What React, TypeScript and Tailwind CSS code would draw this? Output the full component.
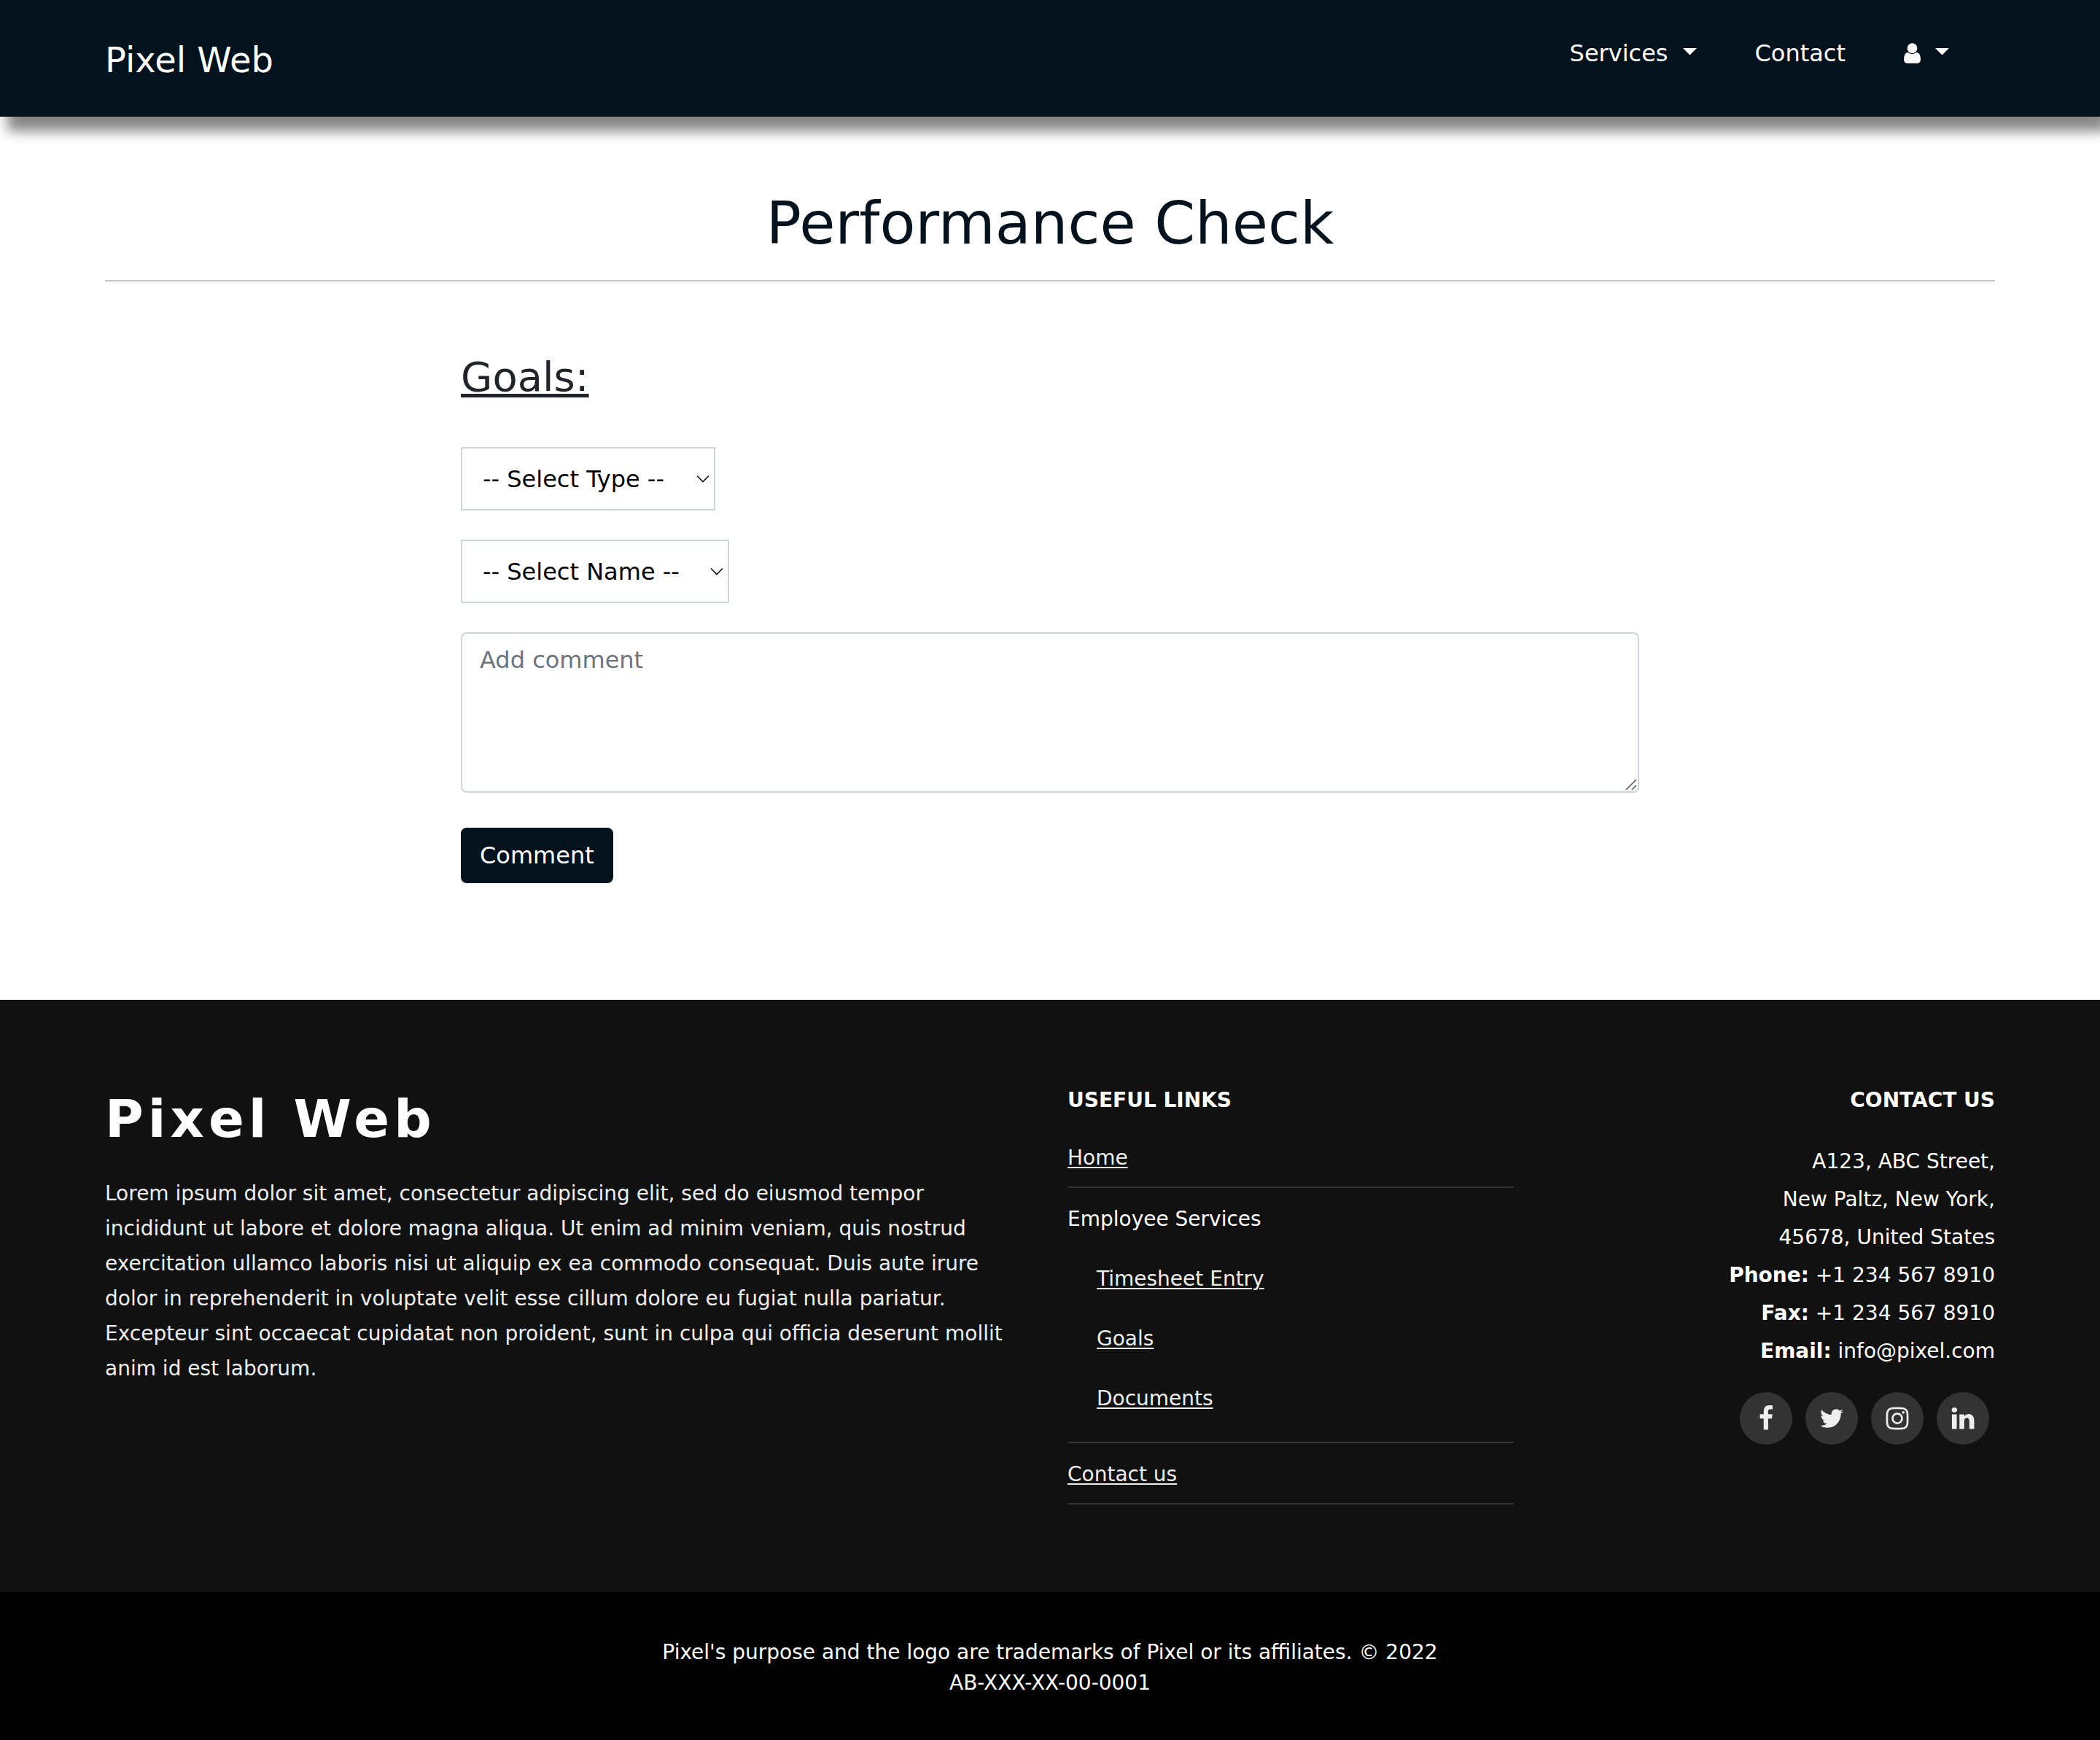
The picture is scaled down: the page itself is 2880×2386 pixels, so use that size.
import React from "react";

type IconProps = { className?: string };

const socialPaths = {
  facebook:
    "M1343 12v264h-157q-86 0-116 36t-30 108v189h293l-39 296h-254v759h-306v-759h-255v-296h255v-218q0-186 104-288.5t277-102.5q147 0 228 12z",
  twitter:
    "M1684 408q-67 98-162 167 1 14 1 42 0 130-38 259.5t-115.5 248.5-184.5 210.5-258 146-323 54.5q-271 0-496-145 35 4 78 4 225 0 401-138-105-2-188-64.5t-114-159.5q33 5 61 5 43 0 85-11-112-23-185.5-111.5t-73.5-205.5v-4q68 38 146 41-66-44-105-115t-39-154q0-88 44-163 121 149 294.5 238.5t371.5 99.5q-8-38-8-74 0-134 94.5-228.5t228.5-94.5q140 0 236 102 109-21 205-78-37 115-142 178 93-10 186-50z",
  instagram:
    "M1152 896q0-106-75-181t-181-75-181 75-75 181 75 181 181 75 181-75 75-181zm138 0q0 164-115 279t-279 115-279-115-115-279 115-279 279-115 279 115 115 279zm108-410q0 38-27 65t-65 27-65-27-27-65 27-65 65-27 65 27 27 65zm-502-220q-7 0-76.5-.5t-105.5 0-96.5 3-103 10-71.5 18.5q-50 20-88 58t-58 88q-11 29-18.5 71.5t-10 103-3 96.5 0 105.5.5 76.5-.5 76.5 0 105.5 3 96.5 10 103 18.5 71.5q20 50 58 88t88 58q29 11 71.5 18.5t103 10 96.5 3 105.5 0 76.5-.5 76.5.5 105.5 0 96.5-3 103-10 71.5-18.5q50-20 88-58t58-88q11-29 18.5-71.5t10-103 3-96.5 0-105.5-.5-76.5.5-76.5 0-105.5-3-96.5-10-103-18.5-71.5q-20-50-58-88t-88-58q-29-11-71.5-18.5t-103-10-96.5-3-105.5 0-76.5.5zm768 630q0 229-5 317-10 208-124 322t-322 124q-88 5-317 5t-317-5q-208-10-322-124t-124-322q-5-88-5-317t5-317q10-208 124-322t322-124q88-5 317-5t317 5q208 10 322 124t124 322q5 88 5 317z",
  linkedin:
    "M477 625v991h-330v-991h330zm21-306q1 73-50.5 122t-135.5 49h-2q-82 0-132-49t-50-122q0-74 51.5-122.5t134.5-48.5 133 48.5 51 122.5zm1166 729v568h-329v-530q0-105-40.5-164.5t-126.5-59.5q-63 0-105.5 34.5t-63.5 85.5q-11 30-11 81v553h-329q2-399 2-647t-1-296l-1-48h329v144h-2q20-32 41-56t56.5-52 87-43.5 114.5-15.5q171 0 275 113.5t104 332.5z",
};

const socials = [
  { label: "Facebook", path: socialPaths.facebook },
  { label: "Twitter", path: socialPaths.twitter },
  { label: "Instagram", path: socialPaths.instagram },
  { label: "LinkedIn", path: socialPaths.linkedin },
];

function UserIcon({ className }: IconProps) {
  return (
    <svg viewBox="256 0 1280 1792" fill="currentColor" className={className} aria-hidden="true">
      <path d="M1536 1399q0 109-62.5 187t-150.5 78h-854q-88 0-150.5-78t-62.5-187q0-85 8.5-160.5t31.5-152 58.5-131 94-89 134.5-34.5q131 128 313 128t313-128q76 0 134.5 34.5t94 89 58.5 131 31.5 152 8.5 160.5zm-256-887q0 159-112.5 271.5t-271.5 112.5-271.5-112.5-112.5-271.5 112.5-271.5 271.5-112.5 271.5 112.5 112.5 271.5z" />
    </svg>
  );
}

function Caret() {
  return (
    <svg viewBox="0 0 19 10" fill="currentColor" className="mb-1 h-[10px] w-[19px]" aria-hidden="true">
      <path d="M0 0H19L9.5 9.5Z" />
    </svg>
  );
}

function Header() {
  return (
    <header className="relative flex items-start justify-between bg-[#04121e] px-[5%] pt-[46px] pb-[42px] text-white shadow-[10px_20px_16px_#888888]">
      <a href="#" className="text-[48px] leading-[72px]">
        Pixel Web
      </a>
      <nav className="flex items-center gap-20 pt-[3px] pr-[63px] text-[32px] leading-[48px]">
        <button type="button" className="flex items-center gap-5">
          Services
          <Caret />
        </button>
        <a href="#">Contact</a>
        <button type="button" aria-label="Account" className="flex h-12 items-center gap-5">
          <UserIcon className="h-8 w-[23px]" />
          <Caret />
        </button>
      </nav>
    </header>
  );
}

function SelectBox({ label, placeholder, width }: { label: string; placeholder: string; width: string }) {
  return (
    <div className={`relative ${width}`}>
      <select
        aria-label={label}
        className="block h-[87px] w-full appearance-none border-2 border-[#ced4da] bg-white pl-7 text-[32px] leading-[48px] text-black"
      >
        <option>{placeholder}</option>
      </select>
      <svg
        viewBox="0 0 20 12"
        fill="none"
        stroke="#111"
        strokeWidth="1.6"
        className="pointer-events-none absolute top-[38px] right-[7px] h-3 w-5"
        aria-hidden="true"
      >
        <path d="M2 1.5L10 9.5L18 1.5" />
      </svg>
    </div>
  );
}

function GoalsForm() {
  return (
    <form className="mx-auto mt-[97px] flex max-w-[1680px] flex-col items-start px-8">
      <h2 className="text-[56px] leading-[67px] text-[#212529] underline decoration-[5px] underline-offset-[4px]">
        Goals:
      </h2>
      <div className="mt-[63px] flex w-full flex-col gap-10">
        <SelectBox label="Goal type" placeholder="-- Select Type --" width="w-[349px]" />
        <SelectBox label="Employee name" placeholder="-- Select Name --" width="w-[368px]" />
        <div className="relative w-full">
          <textarea
            rows={4}
            aria-label="Comment"
            placeholder="Add comment"
            className="block w-full resize-none rounded-lg border-2 border-[#ced4da] bg-white px-6 py-3 text-[32px] leading-[48px] text-[#495057] placeholder:text-[#6c757d]"
          />
          <svg
            viewBox="0 0 16 16"
            stroke="#555"
            strokeWidth="1.5"
            className="pointer-events-none absolute right-[3px] bottom-[3px] size-4"
            aria-hidden="true"
          >
            <path d="M1 15L15 1M9 15L15 9" />
          </svg>
        </div>
      </div>
      <button
        type="button"
        className="mt-12 rounded-lg border-2 border-[#04121e] bg-[#04121e] px-6 py-3 text-[32px] leading-[48px] text-white"
      >
        Comment
      </button>
    </form>
  );
}

const ruledRow = "border-b-2 border-[#333] pt-[22px] pb-[18px]";
const linkStyle = "text-[#eee] underline decoration-2 underline-offset-[3px]";

function Footer() {
  return (
    <footer className="bg-[#111] text-[28px] leading-[42px] text-white">
      <div className="grid grid-cols-4 gap-12 px-[5%] py-[120px]">
        <section className="col-span-2">
          <h2 className="text-[72px] leading-[86px] font-bold tracking-[6px]">Pixel Web</h2>
          <p className="mt-9 pr-7 leading-[48px] text-[#eee]">
            Lorem ipsum dolor sit amet, consectetur adipiscing elit, sed do eiusmod tempor incididunt ut labore et
            dolore magna aliqua. Ut enim ad minim veniam, quis nostrud exercitation ullamco laboris nisi ut aliquip ex
            ea commodo consequat. Duis aute irure dolor in reprehenderit in voluptate velit esse cillum dolore eu fugiat
            nulla pariatur. Excepteur sint occaecat cupidatat non proident, sunt in culpa qui officia deserunt mollit
            anim id est laborum.
          </p>
        </section>

        <section>
          <h3 className="mb-[18px] leading-9 font-bold">USEFUL LINKS</h3>
          <ul>
            <li className={ruledRow}>
              <a href="#" className={linkStyle}>Home</a>
            </li>
            <li className={ruledRow}>
              Employee Services
              <ul className="mt-5 pl-10">
                <li className="py-5">
                  <a href="#" className={linkStyle}>Timesheet Entry</a>
                </li>
                <li className="py-5">
                  <a href="#" className={linkStyle}>Goals</a>
                </li>
                <li className="py-5">
                  <a href="#" className={linkStyle}>Documents</a>
                </li>
              </ul>
            </li>
            <li className={ruledRow}>
              <a href="#" className={linkStyle}>Contact us</a>
            </li>
          </ul>
        </section>

        <section className="text-right">
          <h3 className="leading-9 font-bold">CONTACT US</h3>
          <address className="mt-10 leading-[52px] not-italic">
            <p>A123, ABC Street,</p>
            <p>New Paltz, New York,</p>
            <p>45678, United States</p>
            <p><strong>Phone:</strong> +1 234 567 8910</p>
            <p><strong>Fax:</strong> +1 234 567 8910</p>
            <p><strong>Email:</strong> info@pixel.com</p>
          </address>
          <div className="mt-[30px] flex justify-end gap-[18px] pr-2">
            {socials.map((s) => (
              <a
                key={s.label}
                href="#"
                aria-label={s.label}
                className="flex size-[72px] items-center justify-center rounded-full bg-[#333] text-[#eee]"
              >
                <svg viewBox="0 0 1792 1792" fill="currentColor" className="size-9" aria-hidden="true">
                  <path d={s.path} />
                </svg>
              </a>
            ))}
          </div>
        </section>
      </div>
      <div className="bg-black px-[5%] pt-[62px] pb-[57px] text-center">
        <p>Pixel's purpose and the logo are trademarks of Pixel or its affiliates. © 2022</p>
        <p>AB-XXX-XX-00-0001</p>
      </div>
    </footer>
  );
}

export default function App() {
  return (
    <div className="bg-white font-['DejaVu_Sans',Verdana,sans-serif]">
      <Header />
      <main className="px-[5%] pt-[99px] pb-40">
        <h1 className="border-b-2 border-[#c8c8c8] pb-[29px] text-center text-[80px] leading-[96px] text-[#04121e]">
          Performance Check
        </h1>
        <GoalsForm />
      </main>
      <Footer />
    </div>
  );
}
